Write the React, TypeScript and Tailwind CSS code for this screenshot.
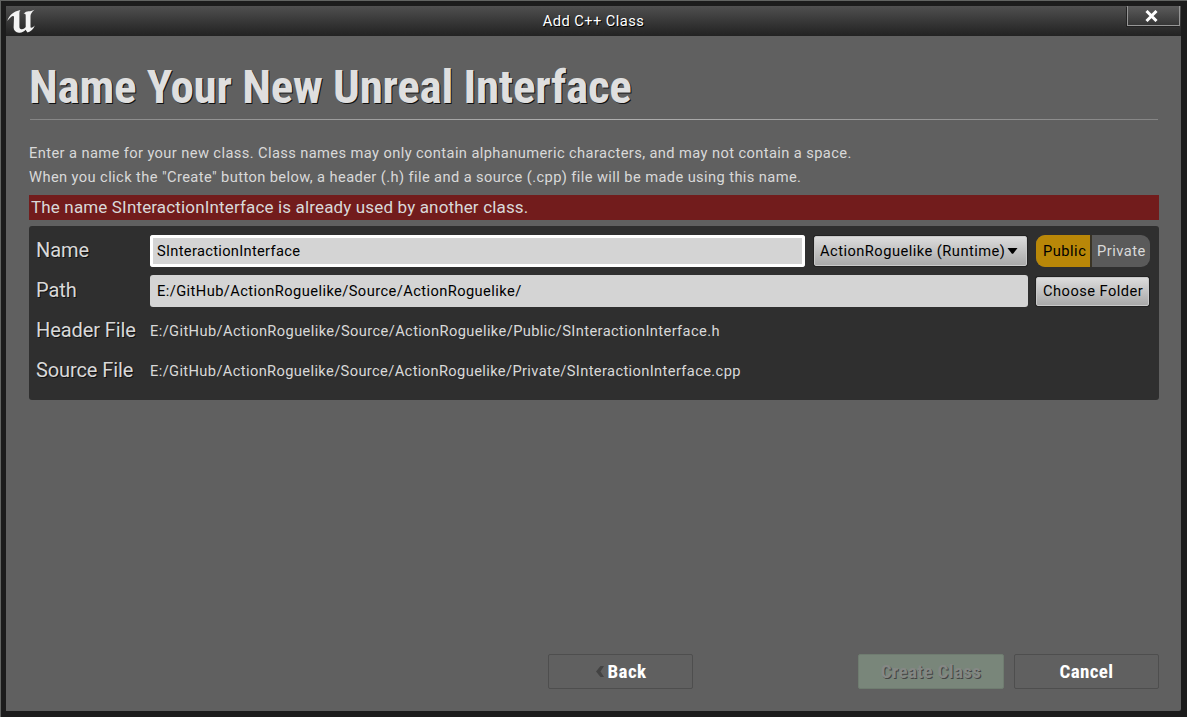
import React from "react";

const BODY = "text-[14.67px] whitespace-nowrap";
const FIELD = `${BODY} h-8 rounded-[3px] bg-[#d4d4d4] px-[7px] leading-[33px] text-black`;
const LABEL = "w-[114px] shrink-0 text-[20px] leading-[30px] tracking-[-0.1px] [text-shadow:1px_1px_0_#111] whitespace-nowrap";
const CONDENSED = "font-bold [font-family:'Roboto_Condensed',Roboto,sans-serif] [font-stretch:75%]";
const BUTTON = "rounded-[2px] border border-[#c9c9c9] bg-linear-to-b from-[#dcdcdc] to-[#a9a9a9] text-[14.67px] tracking-[0.47px] text-black whitespace-nowrap shadow-[0_0_0_1px_#222]";

function Logo() {
  return (
    <svg className="h-6 w-7" viewBox="0 0 28 24">
      <path
        d="M0.300 12C2 6.500 6 2.500 13.500 1C12.700 2 12.400 3 12.400 4.500V17.500C12.400 19.500 13.400 20.400 14.800 20.200C16.600 20 18 19 18.700 18V6.500C18.700 5 18 4.600 16.500 5C18 3 20 2.300 21.500 2.300C24 2.300 26 1.700 27.500 0.800C25 3 23.500 5 23.500 7V17.500C23.500 19.500 25.200 19 27.800 16.500C26.500 20 24 22.500 20.500 23.400L18.500 20.800C17 22.600 15 23.900 12 23.700C8.600 23.400 6.600 21.500 6.600 18.500L7 8.500C7 6.700 5.600 6.600 4 8C2.500 9.200 1.200 10.500 0.300 12Z"
        fill="#f4f4f4"
      />
    </svg>
  );
}

export default function App() {
  return (
    <div className="h-[717px] w-[1187px] overflow-hidden border-t border-l border-[#626462] bg-[#1c1c1c] pt-[5px] pl-[5px] pr-[6px] font-[Roboto,sans-serif] text-[#d9d9d9]">
      <header className="flex h-[30px] items-start justify-between bg-linear-to-b from-[#505050] to-[#222]">
        <div className="w-[54px] pt-[3px] pl-px"><Logo /></div>
        <h1 className="text-[14.67px] leading-[31px] tracking-[0.45px] text-white [text-shadow:1px_1px_0_#000]">Add C++ Class</h1>
        <div className="w-[54px]">
          <button className="flex h-5 w-[53px] items-center justify-center border border-t-0 border-[#969696] bg-linear-to-b from-[#5c5c5c] to-[#363636] pr-1 shadow-[-1px_1px_0_#222]">
            <svg className="h-3 w-[13px]" viewBox="0 0 13 12"><path d="M1.500 1L11.500 11M11.500 1L1.500 11" stroke="#fff" strokeWidth="3" /></svg>
          </button>
        </div>
      </header>
      <main className="flex h-[675px] flex-col rounded-br-[2px] bg-[#606060] pl-[23px] pr-[22px]">
        <h2 className={`${CONDENSED} h-[83px] shrink-0 pt-[23px] text-[47px] leading-[56px] tracking-[-0.27px] text-[#dfdfdf] whitespace-nowrap [text-shadow:1px_1px_0_#111]`}>
          Name Your New Unreal Interface
        </h2>
        <div className="mr-px ml-px h-px shrink-0 bg-linear-to-r from-[#858585] via-[#b0b0b0] to-[#858585]" />
        <div className="pt-[21px] text-[14.67px] leading-6 tracking-[0.4px] whitespace-nowrap">
          <p>Enter a name for your new class. Class names may only contain alphanumeric characters, and may not contain a space.</p>
          <p>When you click the "Create" button below, a header (.h) file and a source (.cpp) file will be made using this name.</p>
        </div>
        <div className="mt-[6px] h-[25px] bg-[#721c1c] pl-[2px] text-[17px] leading-[25px] tracking-[0.15px]">The name SInteractionInterface is already used by another class.</div>
        <section className="mt-[6px] h-[174px] rounded-[3px] bg-[#2f2f2f] pt-[9px] pr-[9px] pl-[7px]">
          <div className="flex h-10 items-start">
            <span className={LABEL}>Name</span>
            <div className={`${FIELD} w-[655px] tracking-[0.31px] shadow-[inset_0_0_0_3px_#fff]`}>SInteractionInterface</div>
            <button className={`${BUTTON} mt-px ml-[9px] flex h-[30px] w-[213px] items-center gap-[2px] pl-[5px]`}>
              <span>ActionRoguelike (Runtime)</span>
              <svg className="h-[6px] w-[11px]" viewBox="0 0 11 6"><path d="M0.500 0H10.500L6.500 5.200Q5.500 6.300 4.500 5.200Z" /></svg>
            </button>
            <div className="ml-[9px] flex h-8 w-[114px] overflow-hidden rounded-[9px] bg-[#5a5a5a] text-[14.67px] leading-8 tracking-[0.49px]">
              <span className="w-[56px] border-r-2 border-[#3a3426] bg-[#b98708] pl-[7px] text-black">Public</span>
              <span className="pl-[5px]">Private</span>
            </div>
          </div>
          <div className="flex h-10 items-start">
            <span className={LABEL}>Path</span>
            <div className={`${FIELD} w-[878px] tracking-[0.42px]`}>E:/GitHub/ActionRoguelike/Source/ActionRoguelike/</div>
            <button className={`${BUTTON} mt-[2px] ml-2 flex h-[29px] w-[113px] items-center pl-[6px] leading-[27px]`}>
              <span className="pb-px">Choose Folder</span>
            </button>
          </div>
          <div className="flex h-10 items-start">
            <span className={LABEL}>Header File</span>
            <span className={`${BODY} leading-[33px] tracking-[0.39px]`}>E:/GitHub/ActionRoguelike/Source/ActionRoguelike/Public/SInteractionInterface.h</span>
          </div>
          <div className="flex h-10 items-start">
            <span className={LABEL}>Source File</span>
            <span className={`${BODY} leading-[33px] tracking-[0.375px]`}>E:/GitHub/ActionRoguelike/Source/ActionRoguelike/Private/SInteractionInterface.cpp</span>
          </div>
        </section>
        <footer className={`${CONDENSED} mt-auto mb-[22px] flex h-[35px] justify-end text-[19px] leading-[33px] tracking-[0.35px] text-white [text-shadow:1px_1px_0_#000]`}>
          <button className="mr-[165px] flex w-[145px] items-center justify-center gap-1 rounded-[2px] border border-[#4e4e4e] pl-px">
            <svg className="h-[11px] w-2" viewBox="0 0 8 11"><path d="M4.500 0H8L4.500 5.500L8 11H4.500L0 5.500Z" fill="#434343" /></svg>
            <span>Back</span>
          </button>
          <button className="mr-[10px] flex w-[146px] items-center justify-center rounded-[2px] border border-[#6f7c70] bg-[#79867a] text-[#858885] [text-shadow:1px_1px_0_#444]">
            <span>Create Class</span>
          </button>
          <button className="flex w-[145px] items-center justify-center rounded-[2px] border border-[#4e4e4e]">
            <span>Cancel</span>
          </button>
        </footer>
      </main>
    </div>
  );
}
